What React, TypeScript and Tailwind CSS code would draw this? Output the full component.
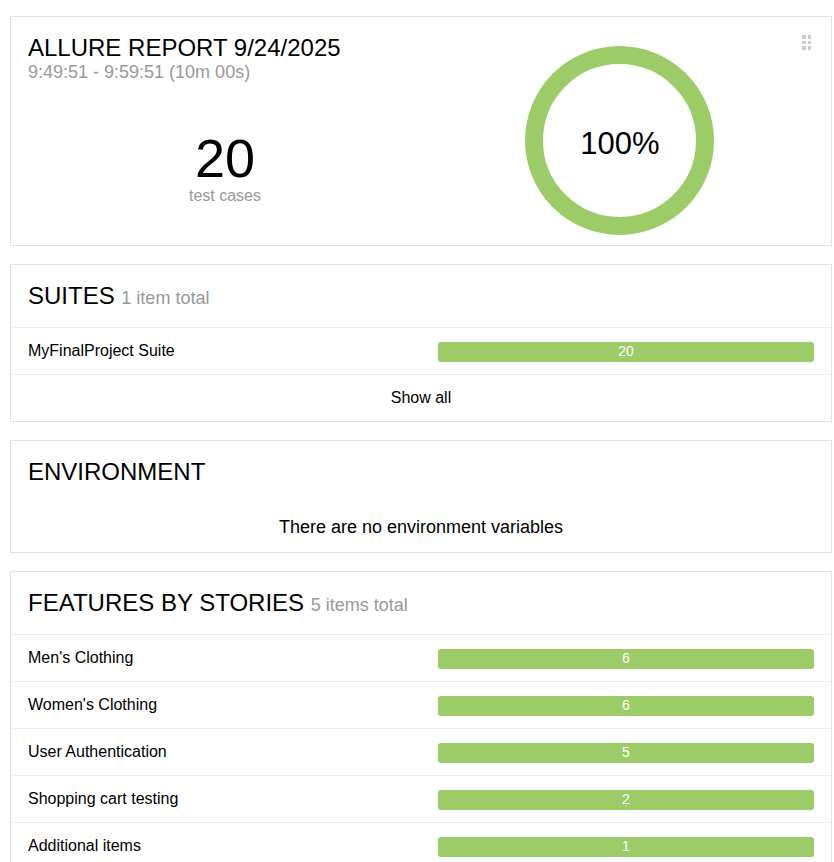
import type { ReactNode } from "react";

type Item = { name: string; passed: number };

const suites: Item[] = [{ name: "MyFinalProject Suite", passed: 20 }];

const features: Item[] = [
  { name: "Men's Clothing", passed: 6 },
  { name: "Women's Clothing", passed: 6 },
  { name: "User Authentication", passed: 5 },
  { name: "Shopping cart testing", passed: 2 },
  { name: "Additional items", passed: 1 },
];

function Widget({ children }: { children: ReactNode }) {
  return <section className="relative border border-[#e3e3e3] bg-white">{children}</section>;
}

function WidgetTitle({ title, note }: { title: string; note?: string }) {
  return (
    <h2 className="px-[17px] pt-4 pb-4 text-2xl leading-[30px]">
      {title} {note && <span className="text-lg leading-none text-[#999]">{note}</span>}
    </h2>
  );
}

function ItemRow({ item }: { item: Item }) {
  return (
    <a href="#" className="flex border-t border-[#eceeef] px-[17px] pt-3.5 pb-3">
      <span className="flex-1 text-base leading-[18px]">{item.name}</span>
      <span className="h-5 w-[376px] rounded-[3px] bg-[#9ccc67] text-center text-sm leading-[18px] text-white">
        {item.passed}
      </span>
    </a>
  );
}

function DragHandle() {
  return (
    <button type="button" aria-label="Move widget" className="absolute top-[18px] right-5 cursor-move">
      <svg width="9" height="15" viewBox="0 0 9 15" fill="#ccc" shapeRendering="crispEdges" className="block">
        <rect x="0" y="0" width="4" height="4" />
        <rect x="6" y="0" width="3" height="4" />
        <rect x="0" y="6" width="4" height="3" />
        <rect x="6" y="6" width="3" height="3" />
        <rect x="0" y="11" width="4" height="4" />
        <rect x="6" y="11" width="3" height="4" />
      </svg>
    </button>
  );
}

export default function App() {
  return (
    <main className="flex flex-col gap-[18px] bg-white pt-4 pr-0.5 pl-2.5 font-['Liberation_Sans',Arial,sans-serif] text-black">
      <Widget>
        <DragHandle />
        <div className="flex pr-[15px] pl-[17px]">
          <div className="flex-1 pt-4">
            <h2 className="text-2xl leading-[30px]">ALLURE REPORT 9/24/2025</h2>
            <p className="text-lg leading-[18px] text-[#999]">9:49:51 - 9:59:51 (10m 00s)</p>
            <div className="pt-[50px] text-center">
              <div className="text-[54px] leading-[54px]">20</div>
              <div className="text-base leading-[22px] text-[#999]">test cases</div>
            </div>
          </div>
          <div className="flex flex-1 justify-center pt-[29px] pb-[10px]">
            <svg width="189" height="189" viewBox="0 0 189 189" role="img" aria-label="100% passed">
              <circle cx="94.5" cy="94.5" r="85.5" fill="none" stroke="#9ccc67" strokeWidth="18" />
              <text x="95" y="108" textAnchor="middle" fontSize="31" fill="#000">
                100%
              </text>
            </svg>
          </div>
        </div>
      </Widget>

      <Widget>
        <WidgetTitle title="SUITES" note="1 item total" />
        {suites.map((item) => (
          <ItemRow key={item.name} item={item} />
        ))}
        <a href="#" className="block border-t border-[#eceeef] py-3 text-center text-base leading-[22px]">
          Show all
        </a>
      </Widget>

      <Widget>
        <WidgetTitle title="ENVIRONMENT" />
        <p className="pt-3.5 pb-3.5 text-center text-lg leading-[21px]">There are no environment variables</p>
      </Widget>

      <Widget>
        <WidgetTitle title="FEATURES BY STORIES" note="5 items total" />
        {features.map((item) => (
          <ItemRow key={item.name} item={item} />
        ))}
      </Widget>
    </main>
  );
}
